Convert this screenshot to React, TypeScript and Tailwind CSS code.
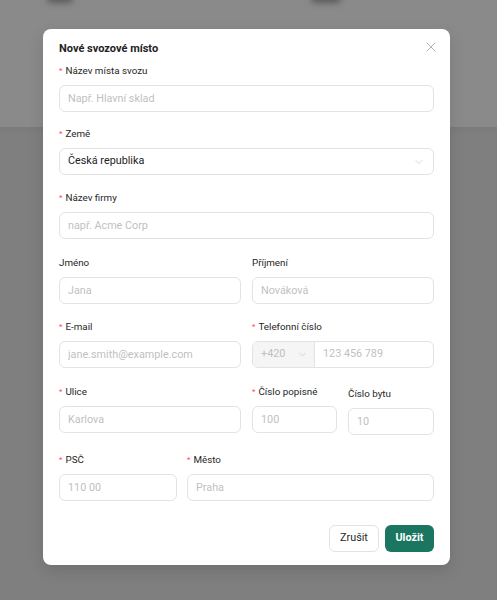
import { X, ChevronDown } from 'lucide-react';

function Label({ text, required }: { text: string; required?: boolean }) {
    return (
        <div className="flex h-[18px] items-center pt-[2px] text-[9.8px] leading-[16px] text-[#262626]">
            {required && <span className="mr-[3px] text-[8px] text-[#ff4d4f]">*</span>}
            {text}
        </div>
    );
}

function Input({ placeholder }: { placeholder: string }) {
    return (
        <input
            placeholder={placeholder}
            className="h-[27px] w-full rounded-md border border-[#e3e3e3] bg-white px-2 text-[10.8px] text-[#222] outline-none placeholder:text-[#bfbfbf]"
        />
    );
}

function Field({ label, placeholder, required, className = '' }: { label: string; placeholder: string; required?: boolean; className?: string }) {
    return (
        <div className={`flex flex-col gap-[6px] ${className}`}>
            <Label text={label} required={required} />
            <Input placeholder={placeholder} />
        </div>
    );
}

export default function App() {
    return (
        <div className="relative min-h-[600px] w-full bg-[#7f7f80]" style={{ fontFamily: 'Roboto, "Noto Sans", sans-serif' }}>
            {/* page behind the overlay */}
            <div className="relative h-[127px] bg-[#8a8a8a] shadow-[0_2px_8px_rgba(0,0,0,0.06)]">
                <div className="absolute left-[47px] top-[-6px] h-[9px] w-[26px] rounded-md bg-[#5a5a5a] blur-[3px]" />
                <div className="absolute left-[311px] top-[-6px] h-[9px] w-[30px] rounded-md bg-[#5a5a5a] blur-[3px]" />
            </div>

            <div className="absolute left-[43px] top-[29px] w-[407px] rounded-lg bg-white px-4 pb-[13px] pt-[10px] shadow-[0_6px_16px_rgba(0,0,0,0.12)]">
                <div className="flex h-5 items-center justify-between">
                    <h2 className="text-[11px] font-bold text-[#1f1f1f]">Nové svozové místo</h2>
                    <button className="-mr-[5px] -mt-1 text-[#a0a0a0]">
                        <X size={16} strokeWidth={1.2} />
                    </button>
                </div>

                <div className="mt-[2px] flex flex-col">
                    <Field label="Název místa svozu" placeholder="Např. Hlavní sklad" required />

                    <div className="mt-[12px] flex flex-col gap-[6px]">
                        <Label text="Země" required />
                        <div className="flex h-[27px] items-center justify-between rounded-md border border-[#e3e3e3] px-2">
                            <span className="text-[10.8px] text-[#222]">Česká republika</span>
                            <ChevronDown size={12} strokeWidth={1.3} className="text-[#c4c4c4]" />
                        </div>
                    </div>

                    <Field label="Název firmy" placeholder="např. Acme Corp" required className="mt-[13px]" />

                    <div className="mt-[14px] grid grid-cols-2 gap-[11px]">
                        <Field label="Jméno" placeholder="Jana" />
                        <Field label="Příjmení" placeholder="Nováková" />
                    </div>

                    <div className="mt-[13px] grid grid-cols-2 gap-[11px]">
                        <Field label="E-mail" placeholder="jane.smith@example.com" required />
                        <div className="flex flex-col gap-[6px]">
                            <Label text="Telefonní číslo" required />
                            <div className="flex h-[27px] overflow-hidden rounded-md border border-[#e3e3e3]">
                                <div className="flex w-[62px] shrink-0 items-center justify-between border-r border-[#e3e3e3] bg-[#f5f5f5] pl-2 pr-[6px] text-[10.8px] text-[#bfbfbf]">
                                    <span>+420</span>
                                    <ChevronDown size={11} strokeWidth={1.3} className="text-[#bdbdbd]" />
                                </div>
                                <input
                                    placeholder="123 456 789"
                                    className="w-full min-w-0 px-2 text-[10.8px] outline-none placeholder:text-[#bfbfbf]"
                                />
                            </div>
                        </div>
                    </div>

                    <div className="mt-[14px] flex gap-[11px]">
                        <Field label="Ulice" placeholder="Karlova" required className="w-[182px]" />
                        <Field label="Číslo popisné" placeholder="100" required className="w-[85px]" />
                        <Field label="Číslo bytu" placeholder="10" className="mt-[2px] flex-1" />
                    </div>

                    <div className="mt-[15px] flex gap-[10px]">
                        <Field label="PSČ" placeholder="110 00" required className="w-[118px]" />
                        <Field label="Město" placeholder="Praha" required className="flex-1" />
                    </div>
                </div>

                <div className="mt-[24px] flex justify-end gap-[6px]">
                    <button className="h-[27px] w-[50px] rounded-md border border-[#e3e3e3] bg-white text-[10.8px] text-[#262626]">
                        Zrušit
                    </button>
                    <button className="h-[27px] w-[49px] rounded-md bg-[#1b7661] text-[10.8px] font-bold text-white">
                        Uložit
                    </button>
                </div>
            </div>
        </div>
    );
}
